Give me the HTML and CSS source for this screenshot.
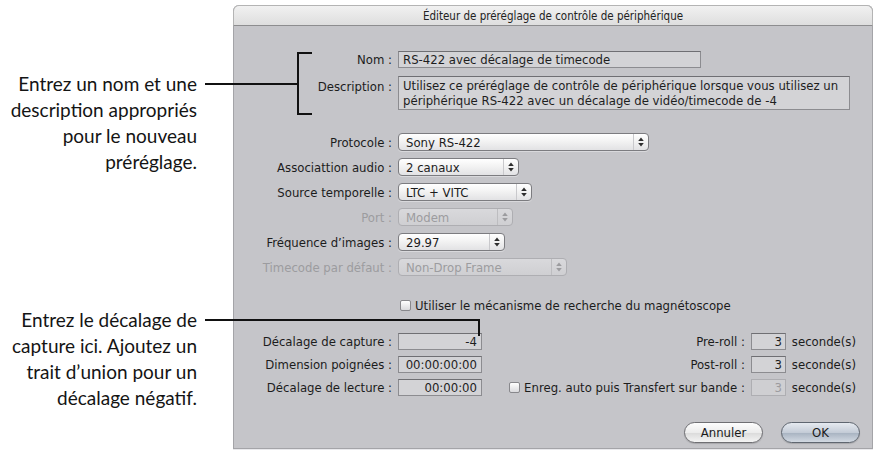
FILE: index.html
```html
<!DOCTYPE html>
<html lang="fr">
<head>
<meta charset="utf-8">
<title>Éditeur de préréglage de contrôle de périphérique</title>
<link rel="stylesheet" href="styles.css">
</head>
<body>
<div class="page">
  <div class="notes">
    <p class="note note-top">Entrez un nom et une<br>description appropriés<br>pour le nouveau<br>préréglage.</p>
    <p class="note note-bottom">Entrez le décalage de<br>capture ici. Ajoutez un<br>trait d’union pour un<br>décalage négatif.</p>
  </div>

  <div class="dialog">
    <div class="titlebar">Éditeur de préréglage de contrôle de périphérique</div>
    <div class="content">
      <div class="row row-nom">
        <span class="label">Nom :</span>
        <div class="field field-nom">RS-422 avec décalage de timecode</div>
      </div>
      <div class="row row-desc">
        <span class="label">Description :</span>
        <div class="field field-desc">Utilisez ce préréglage de contrôle de périphérique lorsque vous utilisez un<br>périphérique RS-422 avec un décalage de vidéo/timecode de -4</div>
      </div>

      <div class="popups">
        <div class="row">
          <span class="label">Protocole :</span>
          <div class="popup w-protocole"><span class="popup-text">Sony RS-422</span><span class="popup-arrows"><svg width="6" height="10" viewBox="0 0 6 10"><path d="M3 0.5 L5.8 4 L0.2 4 Z M0.2 6 L5.8 6 L3 9.5 Z"/></svg></span></div>
        </div>
        <div class="row">
          <span class="label">Associattion audio :</span>
          <div class="popup w-audio"><span class="popup-text">2 canaux</span><span class="popup-arrows"><svg width="6" height="10" viewBox="0 0 6 10"><path d="M3 0.5 L5.8 4 L0.2 4 Z M0.2 6 L5.8 6 L3 9.5 Z"/></svg></span></div>
        </div>
        <div class="row">
          <span class="label">Source temporelle :</span>
          <div class="popup w-source"><span class="popup-text">LTC + VITC</span><span class="popup-arrows"><svg width="6" height="10" viewBox="0 0 6 10"><path d="M3 0.5 L5.8 4 L0.2 4 Z M0.2 6 L5.8 6 L3 9.5 Z"/></svg></span></div>
        </div>
        <div class="row disabled">
          <span class="label">Port :</span>
          <div class="popup w-port"><span class="popup-text">Modem</span><span class="popup-arrows"><svg width="6" height="10" viewBox="0 0 6 10"><path d="M3 0.5 L5.8 4 L0.2 4 Z M0.2 6 L5.8 6 L3 9.5 Z"/></svg></span></div>
        </div>
        <div class="row">
          <span class="label">Fréquence d’images :</span>
          <div class="popup w-freq"><span class="popup-text">29.97</span><span class="popup-arrows"><svg width="6" height="10" viewBox="0 0 6 10"><path d="M3 0.5 L5.8 4 L0.2 4 Z M0.2 6 L5.8 6 L3 9.5 Z"/></svg></span></div>
        </div>
        <div class="row disabled">
          <span class="label">Timecode par défaut :</span>
          <div class="popup w-tc"><span class="popup-text">Non-Drop Frame</span><span class="popup-arrows"><svg width="6" height="10" viewBox="0 0 6 10"><path d="M3 0.5 L5.8 4 L0.2 4 Z M0.2 6 L5.8 6 L3 9.5 Z"/></svg></span></div>
        </div>
      </div>

      <div class="check-row">
        <span class="check"></span><span>Utiliser le mécanisme de recherche du magnétoscope</span>
      </div>

      <div class="timing">
        <span class="label">Décalage de capture :</span>
        <div class="field num">-4</div>
        <span class="rlabel">Pre-roll :</span>
        <div class="field small">3</div>
        <span class="unit">seconde(s)</span>

        <span class="label">Dimension poignées :</span>
        <div class="field num">00:00:00:00</div>
        <span class="rlabel">Post-roll :</span>
        <div class="field small">3</div>
        <span class="unit">seconde(s)</span>

        <span class="label">Décalage de lecture :</span>
        <div class="field num">00:00:00</div>
        <span class="rlabel"><span class="check"></span>Enreg. auto puis Transfert sur bande :</span>
        <div class="field small off">3</div>
        <span class="unit">seconde(s)</span>
      </div>

      <div class="buttons">
        <button class="btn">Annuler</button>
        <button class="btn btn-default">OK</button>
      </div>
    </div>
  </div>

  <div class="leader leader-top"></div>
  <div class="bracket"></div>
  <div class="leader leader-bottom"></div>
  <div class="leader-drop"></div>
</div>
</body>
</html>
```

FILE: styles.css
```css
* { box-sizing: border-box; }

html, body {
  margin: 0;
  padding: 0;
  background: #ffffff;
}

.page {
  position: relative;
  display: flex;
  width: 876px;
  height: 456px;
  overflow: hidden;
}

/* ---------- annotations ---------- */
.notes {
  width: 233px;
  flex: none;
  display: flex;
  flex-direction: column;
  padding-right: 36px;
}

.note {
  margin: 0;
  text-align: right;
  font-family: Lato, "Open Sans", sans-serif;
  font-size: 19px;
  line-height: 26px;
  color: #141414;
  white-space: nowrap;
}

.note-top { margin-top: 71px; }
.note-bottom { margin-top: 132px; }

.leader, .leader-drop, .bracket {
  position: absolute;
  background: #111;
}

.leader { height: 2px; }
.leader-top { left: 205px; top: 83px; width: 93px; }
.leader-bottom { left: 205px; top: 319px; width: 275px; }
.leader-drop { left: 478px; top: 319px; width: 2px; height: 17px; }

.bracket {
  left: 297px;
  top: 52px;
  width: 15px;
  height: 63px;
  background: transparent;
  border-left: 2px solid #111;
  border-top: 2px solid #111;
  border-bottom: 2px solid #111;
}

/* ---------- dialog ---------- */
.dialog {
  margin-top: 5px;
  width: 640px;
  height: 444px;
  flex: none;
  display: flex;
  flex-direction: column;
  background: #c5c5c9;
  border: 1px solid #a4a4a8;
  border-top: none;
  border-radius: 6px 6px 0 0;
  box-shadow: 0 1px 0 #e9e9ec;
  font-family: "DejaVu Sans Condensed", "DejaVu Sans", sans-serif;
  font-stretch: condensed;
  font-size: 13px;
  color: #1c1c1c;
}

.titlebar {
  height: 21px;
  flex: none;
  display: flex;
  align-items: center;
  justify-content: center;
  background: linear-gradient(#f1f1f1, #dedede);
  border: 1px solid #b4b4b4;
  border-bottom: 1px solid #8d8d8f;
  border-radius: 6px 6px 0 0;
  margin: 0 -1px;
  font-size: 11.5px;
  color: #222;
}

.content {
  flex: 1;
  display: flex;
  flex-direction: column;
  padding-top: 25px;
}

.row {
  display: flex;
  align-items: center;
}

.label {
  width: 158px;
  flex: none;
  margin-right: 6px;
  text-align: right;
  white-space: nowrap;
}

.field {
  height: 17px;
  background: #d3d3d6;
  border: 1px solid #8c8c90;
  border-top-color: #6f6f73;
  padding: 0 4px;
  line-height: 15px;
  white-space: nowrap;
  color: #1e1e1e;
}

.field-nom { width: 303px; }

.row-desc {
  margin-top: 8px;
  align-items: flex-start;
}
.row-desc .label { padding-top: 3px; }

.field-desc {
  width: 452px;
  height: 34px;
  line-height: 15px;
  padding-top: 1px;
  overflow: hidden;
}

/* popups */
.popups {
  display: flex;
  flex-direction: column;
  gap: 7px;
  margin-top: 23px;
}

.popup {
  height: 18px;
  display: flex;
  align-items: center;
  border: 1px solid #7c7c80;
  border-radius: 4px;
  background: linear-gradient(#ffffff, #f3f3f3 45%, #e2e2e4);
  box-shadow: 0 1px 0 rgba(255,255,255,0.35);
}

.popup-text {
  flex: 1;
  padding-left: 7px;
  white-space: nowrap;
}

.popup-arrows {
  width: 15px;
  height: 100%;
  flex: none;
  display: flex;
  align-items: center;
  justify-content: center;
  border-left: 1px solid #c9c9cc;
}
.popup-arrows svg { fill: #2e2e2e; }

.w-protocole { width: 251px; }
.w-audio { width: 121px; }
.w-source { width: 134px; }
.w-port { width: 115px; }
.w-freq { width: 107px; }
.w-tc { width: 169px; }

.disabled { color: #9c9c9f; }
.disabled .popup {
  border-color: #aeaeb2;
  background: linear-gradient(#d9d9dc, #cfcfd2);
  box-shadow: none;
}
.disabled .popup-arrows { border-left-color: #bdbdc0; }
.disabled .popup-arrows svg { fill: #9c9c9f; }

/* checkbox */
.check {
  display: inline-block;
  width: 11px;
  height: 11px;
  flex: none;
  border: 1px solid #88888c;
  border-radius: 2px;
  background: linear-gradient(#ffffff, #dadadd);
  margin-right: 4px;
  vertical-align: -1px;
}

.check-row {
  display: flex;
  align-items: center;
  margin-top: 22px;
  padding-left: 166px;
  height: 14px;
}

/* timing grid */
.timing {
  display: grid;
  grid-template-columns: 158px 84px 1fr 35px auto;
  grid-auto-rows: 17px;
  column-gap: 6px;
  row-gap: 6px;
  align-items: center;
  margin-top: 21px;
  padding-right: 16px;
}

.timing .label { width: auto; margin: 0; }

.num { text-align: right; }
.small { text-align: right; padding: 0 3px; }
.small.off {
  color: #9c9c9f;
  border-color: #aeaeb2;
  background: #cfcfd2;
}

.rlabel {
  text-align: right;
  white-space: nowrap;
}

.unit { white-space: nowrap; }

/* buttons */
.buttons {
  display: flex;
  justify-content: flex-end;
  gap: 18px;
  margin-top: 26px;
  padding-right: 12px;
}

.btn {
  width: 79px;
  height: 21px;
  border-radius: 11px;
  border: 1px solid #6f6f73;
  background: linear-gradient(#fdfdfd, #ececec 50%, #dcdcdc 55%, #f4f4f4);
  font-family: inherit;
  font-stretch: condensed;
  font-size: 13px;
  color: #1a1a1a;
  padding: 0;
  box-shadow: 0 1px 1px rgba(0,0,0,0.15);
}

.btn-default {
  background: linear-gradient(#e6eaf0, #c4ccd7 50%, #aab5c3 55%, #d2d9e2);
  border-color: #5f6670;
}
```
